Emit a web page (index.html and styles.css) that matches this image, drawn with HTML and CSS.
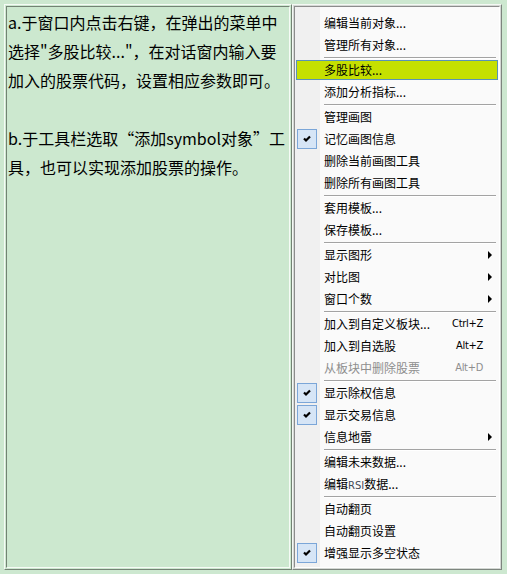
FILE: index.html
```html
<!DOCTYPE html>
<html lang="zh-CN">
<head>
  <meta charset="UTF-8" />
  <title>多股比较</title>
  <link rel="stylesheet" href="styles.css">
</head>
<body>
  <div class="window">
    <div class="note">
      <div class="note-body">
        <p>a.于窗口内点击右键，在弹出的菜单中<br>选择"多股比较..."，在对话窗内输入要<br>加入的股票代码，设置相应参数即可。</p>
        <p>b.于工具栏选取“添加symbol对象”工<br>具，也可以实现添加股票的操作。</p>
      </div>
    </div>

    <div class="menu-frame">
      <ul class="menu">
        <li class="item"><span class="icon"></span><span>编辑当前对象...</span></li>
        <li class="item"><span class="icon"></span><span>管理所有对象...</span></li>
        <li class="sep"></li>
        <li class="item active"><span class="icon"></span><span>多股比较...</span></li>
        <li class="item"><span class="icon"></span><span>添加分析指标...</span></li>
        <li class="sep"></li>
        <li class="item"><span class="icon"></span><span>管理画图</span></li>
        <li class="item checked"><span class="icon"></span><span>记忆画图信息</span></li>
        <li class="item"><span class="icon"></span><span>删除当前画图工具</span></li>
        <li class="item"><span class="icon"></span><span>删除所有画图工具</span></li>
        <li class="sep"></li>
        <li class="item"><span class="icon"></span><span>套用模板...</span></li>
        <li class="item"><span class="icon"></span><span>保存模板...</span></li>
        <li class="sep"></li>
        <li class="item sub"><span class="icon"></span><span>显示图形</span><span></span><span class="arrow"></span></li>
        <li class="item sub"><span class="icon"></span><span>对比图</span><span></span><span class="arrow"></span></li>
        <li class="item sub"><span class="icon"></span><span>窗口个数</span><span></span><span class="arrow"></span></li>
        <li class="sep"></li>
        <li class="item"><span class="icon"></span><span>加入到自定义板块...</span><span class="key">Ctrl+Z</span></li>
        <li class="item"><span class="icon"></span><span>加入到自选股</span><span class="key">Alt+Z</span></li>
        <li class="item disabled"><span class="icon"></span><span>从板块中删除股票</span><span class="key">Alt+D</span></li>
        <li class="sep"></li>
        <li class="item checked"><span class="icon"></span><span>显示除权信息</span></li>
        <li class="item checked"><span class="icon"></span><span>显示交易信息</span></li>
        <li class="item sub"><span class="icon"></span><span>信息地雷</span><span></span><span class="arrow"></span></li>
        <li class="sep"></li>
        <li class="item"><span class="icon"></span><span>编辑未来数据...</span></li>
        <li class="item"><span class="icon"></span><span>编辑<span class="latin">RSI</span>数据...</span></li>
        <li class="sep"></li>
        <li class="item"><span class="icon"></span><span>自动翻页</span></li>
        <li class="item"><span class="icon"></span><span>自动翻页设置</span></li>
        <li class="item checked"><span class="icon"></span><span>增强显示多空状态</span></li>
      </ul>
    </div>
  </div>
</body>
</html>
```

FILE: styles.css
```css
html, body {
  margin: 0;
  height: 100%;
}

body {
  background-color: #cde8d0;
  font-family: "Noto Sans CJK SC", "Liberation Sans", sans-serif;
  color: #000;
}

.window {
  display: flex;
  box-sizing: border-box;
  height: 574px;
  padding: 4px 5px 4px 4px;
}

/* left text panel, double raised line */
.note {
  width: 288px;
  box-sizing: border-box;
  border: 1px solid;
  border-color: #f6fbf6 #738374 #738374 #f6fbf6;
  padding: 1px;
}

.note-body {
  height: 100%;
  box-sizing: border-box;
  border: 1px solid;
  border-color: #738374 #f6fbf6 #f6fbf6 #738374;
  background-color: #cce8cf;
  padding: 1px 0 0 1px;
  font-size: 16px;
  line-height: 29px;
  white-space: nowrap;
}

.note-body p {
  margin: 0 0 29px;
}

/* context menu */
.menu-frame {
  flex: 1;
  box-sizing: border-box;
  border: 1px solid;
  border-color: #f4f8f4 #7d857e #7d857e #f4f8f4;
  padding: 1px;
  background-color: #d4d8d4;
}

.menu {
  list-style: none;
  margin: 0;
  height: 100%;
  box-sizing: border-box;
  border: 1px solid;
  border-color: #8c8c8c #ffffff #ffffff #8c8c8c;
  padding: 5px 1px 3px;
  background: linear-gradient(to right, #f0f0f0 25px, #fafafa 25px);
  font-size: 12px;
}

.item {
  position: relative;
  z-index: 0;
  display: grid;
  grid-template-columns: 28px 1fr auto 15px;
  align-items: center;
  height: 22px;
  line-height: 22px;
}

.item.active::before {
  content: "";
  position: absolute;
  z-index: -1;
  left: 0;
  right: 0;
  top: 1px;
  bottom: 1px;
  background-color: #c5e000;
  border: 1px solid #5a93b6;
}

.icon {
  width: 20px;
  height: 20px;
  margin-left: 1px;
  box-sizing: border-box;
}

.checked .icon {
  border: 1px solid #7ba6d8;
  background-color: #d6e5f6;
  background-image: url("data:image/svg+xml;utf8,<svg xmlns='http://www.w3.org/2000/svg' width='18' height='18'><path d='M6 8.5 L8 10.5 L12 6.5' fill='none' stroke='black' stroke-width='2.2'/></svg>");
  background-repeat: no-repeat;
}

.key {
  font-family: "DejaVu Sans Condensed", "Liberation Sans", sans-serif;
  font-size: 11px;
  letter-spacing: -0.3px;
}

.latin {
  font-family: "DejaVu Sans", sans-serif;
  font-size: 10px;
  color: #444a58;
}

.disabled {
  color: #8e8e8e;
}

.arrow {
  width: 0;
  height: 0;
  margin-left: 5px;
  border-left: 4px solid #000;
  border-top: 4px solid transparent;
  border-bottom: 4px solid transparent;
}

.sep {
  height: 1px;
  margin: 1px 2px 0 28px;
  background-color: #a3a3a3;
  border-bottom: 1px solid #ffffff;
}
```
